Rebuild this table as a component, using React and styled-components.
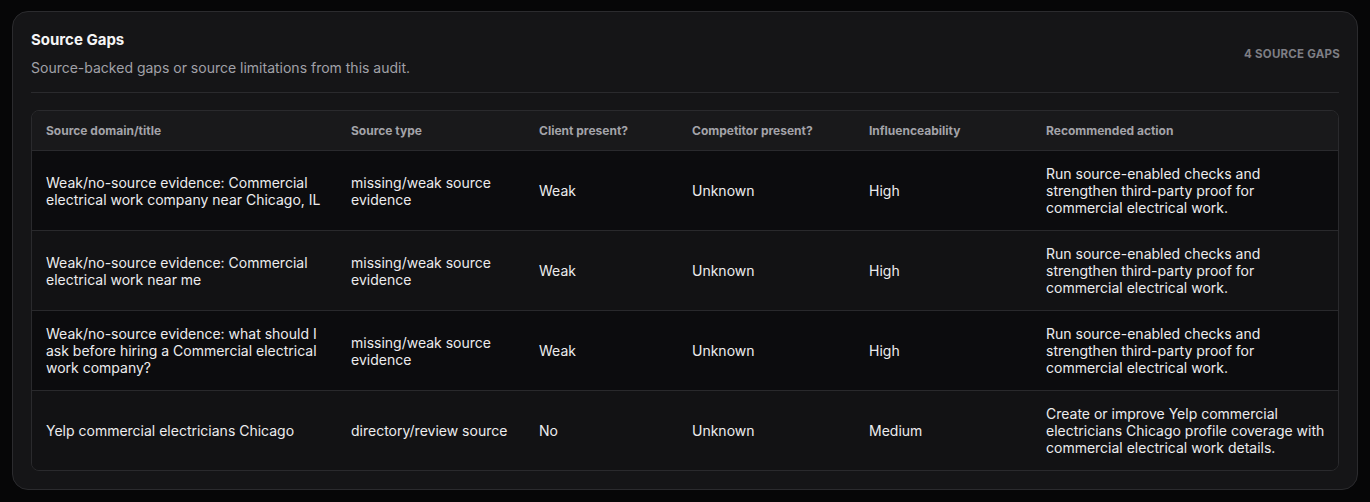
import styled, { createGlobalStyle } from "styled-components";

const GlobalStyle = createGlobalStyle`
  html, body {
    margin: 0;
    background: #060607;
    font-family: Inter, "Noto Sans", sans-serif;
  }
`;

const columns = [
  "Source domain/title",
  "Source type",
  "Client present?",
  "Competitor present?",
  "Influenceability",
  "Recommended action",
];

const gaps = [
  {
    title: "Weak/no-source evidence: Commercial electrical work company near Chicago, IL",
    type: "missing/weak source evidence",
    client: "Weak",
    competitor: "Unknown",
    influence: "High",
    action:
      "Run source-enabled checks and strengthen third-party proof for commercial electrical work.",
  },
  {
    title: "Weak/no-source evidence: Commercial electrical work near me",
    type: "missing/weak source evidence",
    client: "Weak",
    competitor: "Unknown",
    influence: "High",
    action:
      "Run source-enabled checks and strengthen third-party proof for commercial electrical work.",
  },
  {
    title:
      "Weak/no-source evidence: what should I ask before hiring a Commercial electrical work company?",
    type: "missing/weak source evidence",
    client: "Weak",
    competitor: "Unknown",
    influence: "High",
    action:
      "Run source-enabled checks and strengthen third-party proof for commercial electrical work.",
  },
  {
    title: "Yelp commercial electricians Chicago",
    type: "directory/review source",
    client: "No",
    competitor: "Unknown",
    influence: "Medium",
    action:
      "Create or improve Yelp commercial electricians Chicago profile coverage with commercial electrical work details.",
  },
];

export default function App() {
  return (
    <Page>
      <GlobalStyle />
      <Card>
        <CardHeader>
          <div>
            <Title>Source Gaps</Title>
            <Subtitle>Source-backed gaps or source limitations from this audit.</Subtitle>
          </div>
          <Count>{gaps.length} source gaps</Count>
        </CardHeader>
        <TableWrap>
          <Table>
            <colgroup>
              <col style={{ width: 305 }} />
              <col style={{ width: 188 }} />
              <col style={{ width: 153 }} />
              <col style={{ width: 177 }} />
              <col style={{ width: 177 }} />
              <col />
            </colgroup>
            <thead>
              <tr>
                {columns.map((c) => (
                  <Th key={c}>{c}</Th>
                ))}
              </tr>
            </thead>
            <tbody>
              {gaps.map((g, i) => (
                <Row key={i} $alt={i % 2 === 1} $last={i === gaps.length - 1}>
                  <Td>{g.title}</Td>
                  <Td>{g.type}</Td>
                  <Td>{g.client}</Td>
                  <Td>{g.competitor}</Td>
                  <Td>{g.influence}</Td>
                  <Td>{g.action}</Td>
                </Row>
              ))}
            </tbody>
          </Table>
        </TableWrap>
      </Card>
    </Page>
  );
}

const Page = styled.div`
  padding: 11px 12px 13px 12px;
`;

const Card = styled.section`
  background: #151517;
  border: 1px solid #2b2b2e;
  border-radius: 16px;
  padding: 18px 18px 18px 18px;
`;

const CardHeader = styled.div`
  display: flex;
  justify-content: space-between;
  align-items: center;
  padding-bottom: 14px;
  border-bottom: 1px solid #2a2a2d;
  margin-bottom: 17px;
`;

const Title = styled.h2`
  margin: 0;
  font-size: 15px;
  line-height: 20px;
  font-weight: 700;
  color: #f4f4f5;
`;

const Subtitle = styled.p`
  margin: 8px 0 0;
  font-size: 14px;
  line-height: 20px;
  color: #a1a1a8;
`;

const Count = styled.span`
  font-size: 11.5px;
  font-weight: 700;
  text-transform: uppercase;
  letter-spacing: 0.02em;
  color: #7e7e84;
  margin-right: -1px;
`;

const TableWrap = styled.div`
  border: 1px solid #2a2a2d;
  border-radius: 8px;
  overflow: hidden;
`;

const Table = styled.table`
  width: 100%;
  border-collapse: collapse;
  table-layout: fixed;
`;

const Th = styled.th`
  text-align: left;
  background: #19191b;
  height: 39px;
  padding: 0 14px;
  font-size: 12px;
  font-weight: 700;
  color: #a3a3a9;
  border-bottom: 1px solid #2a2a2d;
`;

const Row = styled.tr`
  background: ${(p) => (p.$alt ? "#121214" : "#0c0c0e")};
  td {
    border-bottom: ${(p) => (p.$last ? "none" : "1px solid #29292c")};
  }
`;

const Td = styled.td`
  height: 79px;
  padding: 0 6px 0 14px;
  font-size: 14px;
  line-height: 17px;
  color: #ececee;
  vertical-align: middle;
`;
